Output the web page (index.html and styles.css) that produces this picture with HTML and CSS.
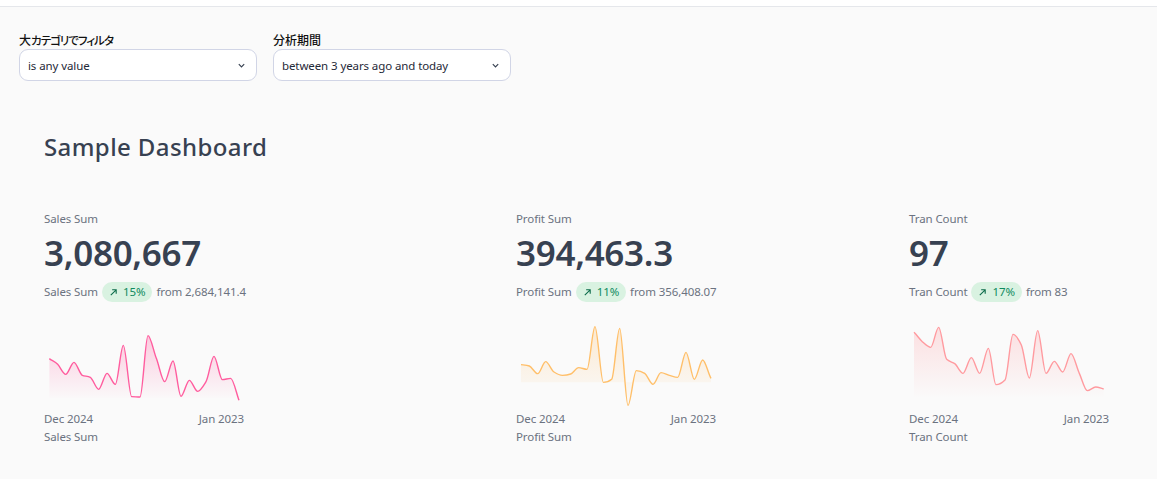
FILE: index.html
```html
<!DOCTYPE html>
<html lang="ja">
<head>
<meta charset="utf-8">
<title>Sample Dashboard</title>
<link rel="stylesheet" href="styles.css">
</head>
<body>
<div class="topbar"></div>
<section class="filters">
  <div class="filter">
    <div class="filter-label">大<span class="kana">カテゴリでフィルタ</span></div>
    <div class="select"><span class="select-text">is any value</span><svg class="chev" viewBox="0 0 10 10"><path d="M2 3.5 5 6.5 8 3.5"/></svg></div>
  </div>
  <div class="filter">
    <div class="filter-label">分析期間</div>
    <div class="select"><span class="select-text">between 3 years ago and today</span><svg class="chev" viewBox="0 0 10 10"><path d="M2 3.5 5 6.5 8 3.5"/></svg></div>
  </div>
</section>
<main class="dashboard">
  <h1 class="title">Sample Dashboard</h1>
  <div class="kpis">
    <article class="kpi">
      <div class="muted">Sales Sum</div>
      <div class="value">3,080,667</div>
      <div class="compare"><span>Sales Sum</span><span class="pill"><svg class="arrow" viewBox="0 0 10 10"><path d="M2 8 8 2M3.5 2H8V6.5"/></svg>15%</span><span>from 2,684,141.4</span></div>
      <svg class="chart" viewBox="42 18 600 270">
        <defs><linearGradient id="gp" x1="0" y1="0" x2="0" y2="1"><stop offset="0" stop-color="#ff5c9e" stop-opacity=".3"/><stop offset="1" stop-color="#ff5c9e" stop-opacity="0"/></linearGradient></defs>
        <path class="area" fill="url(#gp)" d="M58 131C66 137,75 140,83 148C91 156,99 178,107 178C115 178,124 142,132 142C140 142,149 178,157 181C165 184,173 183,181 187C189 191,198 223,206 223C214 223,223 175,231 175C239 175,248 208,256 208C264 208,272 91,280 91C288 91,297 245,305 245C313 245,322 246,330 246C338 246,346 62,354 62C362 62,371 110,379 130C387 150,396 200,404 200C412 200,421 138,429 138C437 138,445 244,453 244C461 244,470 196,478 196C486 196,495 229,503 229C511 229,520 213,528 200C536 187,544 124,552 124C560 124,569 194,577 194C585 194,594 190,602 190C610 190,619 234,627 256L627 250L58 250Z"/>
        <path class="line line-pink" d="M58 131C66 137,75 140,83 148C91 156,99 178,107 178C115 178,124 142,132 142C140 142,149 178,157 181C165 184,173 183,181 187C189 191,198 223,206 223C214 223,223 175,231 175C239 175,248 208,256 208C264 208,272 91,280 91C288 91,297 245,305 245C313 245,322 246,330 246C338 246,346 62,354 62C362 62,371 110,379 130C387 150,396 200,404 200C412 200,421 138,429 138C437 138,445 244,453 244C461 244,470 196,478 196C486 196,495 229,503 229C511 229,520 213,528 200C536 187,544 124,552 124C560 124,569 194,577 194C585 194,594 190,602 190C610 190,619 234,627 256"/>
      </svg>
      <div class="dates muted"><span>Dec 2024</span><span>Jan 2023</span></div>
      <div class="muted chart-label">Sales Sum</div>
    </article>
    <article class="kpi">
      <div class="muted">Profit Sum</div>
      <div class="value">394,463.3</div>
      <div class="compare"><span>Profit Sum</span><span class="pill"><svg class="arrow" viewBox="0 0 10 10"><path d="M2 8 8 2M3.5 2H8V6.5"/></svg>11%</span><span>from 356,408.07</span></div>
      <svg class="chart" viewBox="33 18 600 270">
        <defs><linearGradient id="go" x1="0" y1="0" x2="0" y2="1"><stop offset="0" stop-color="#ffbf69" stop-opacity=".28"/><stop offset="1" stop-color="#ffbf69" stop-opacity="0"/></linearGradient></defs>
        <path class="area" fill="url(#go)" d="M48 149C56 150,65 150,73 153C81 156,90 176,98 176C106 176,114 140,122 140C130 140,139 166,147 171C155 176,164 181,172 181C180 181,189 180,197 177C205 174,213 158,221 158C229 158,238 163,246 163C254 163,262 35,270 35C278 35,287 202,295 202C303 202,312 200,320 193C328 186,336 40,344 40C352 40,361 271,369 271C377 271,386 167,394 167C402 167,411 170,419 175C427 180,436 208,444 208C452 208,460 173,468 173C476 173,485 179,493 181C501 183,510 187,518 187C526 187,535 112,543 112C551 112,560 193,568 193C576 193,585 135,593 135C601 135,610 177,618 190L618 202L48 202Z"/>
        <path class="line line-orange" d="M48 149C56 150,65 150,73 153C81 156,90 176,98 176C106 176,114 140,122 140C130 140,139 166,147 171C155 176,164 181,172 181C180 181,189 180,197 177C205 174,213 158,221 158C229 158,238 163,246 163C254 163,262 35,270 35C278 35,287 202,295 202C303 202,312 200,320 193C328 186,336 40,344 40C352 40,361 271,369 271C377 271,386 167,394 167C402 167,411 170,419 175C427 180,436 208,444 208C452 208,460 173,468 173C476 173,485 179,493 181C501 183,510 187,518 187C526 187,535 112,543 112C551 112,560 193,568 193C576 193,585 135,593 135C601 135,610 177,618 190"/>
      </svg>
      <div class="dates muted"><span>Dec 2024</span><span>Jan 2023</span></div>
      <div class="muted chart-label">Profit Sum</div>
    </article>
    <article class="kpi">
      <div class="muted">Tran Count</div>
      <div class="value">97</div>
      <div class="compare"><span>Tran Count</span><span class="pill"><svg class="arrow" viewBox="0 0 10 10"><path d="M2 8 8 2M3.5 2H8V6.5"/></svg>17%</span><span>from 83</span></div>
      <svg class="chart" viewBox="27 18 600 270">
        <defs><linearGradient id="gr" x1="0" y1="0" x2="0" y2="1"><stop offset="0" stop-color="#ff9a9f" stop-opacity=".28"/><stop offset="1" stop-color="#ff9a9f" stop-opacity="0"/></linearGradient></defs>
        <path class="area" fill="url(#gr)" d="M42 52C50 59,59 73,67 80C75 87,84 97,92 97C100 97,108 37,116 37C124 37,132 126,140 133C148 140,156 141,164 146C172 151,181 175,189 175C197 175,206 128,214 128C222 128,231 175,239 175C247 175,257 100,265 100C273 100,280 209,288 209C296 209,307 203,315 195C323 187,331 58,339 58C347 58,356 73,364 90C372 107,380 189,388 189C396 189,405 47,413 47C421 47,430 175,438 175C446 175,455 139,463 139C471 139,480 171,488 171C496 171,505 116,513 116C521 116,530 158,538 175C546 192,554 227,562 227C570 227,579 216,587 216C595 216,603 220,611 222L611 250L42 250Z"/>
        <path class="line line-red" d="M42 52C50 59,59 73,67 80C75 87,84 97,92 97C100 97,108 37,116 37C124 37,132 126,140 133C148 140,156 141,164 146C172 151,181 175,189 175C197 175,206 128,214 128C222 128,231 175,239 175C247 175,257 100,265 100C273 100,280 209,288 209C296 209,307 203,315 195C323 187,331 58,339 58C347 58,356 73,364 90C372 107,380 189,388 189C396 189,405 47,413 47C421 47,430 175,438 175C446 175,455 139,463 139C471 139,480 171,488 171C496 171,505 116,513 116C521 116,530 158,538 175C546 192,554 227,562 227C570 227,579 216,587 216C595 216,603 220,611 222"/>
      </svg>
      <div class="dates muted"><span>Dec 2024</span><span>Jan 2023</span></div>
      <div class="muted chart-label">Tran Count</div>
    </article>
  </div>
</main>
</body>
</html>
```
FILE: styles.css
```css
* { box-sizing: border-box; }
html, body { margin: 0; height: 100%; overflow: hidden; }
body {
  background: #fafafa;
  font-family: "Noto Sans", "Noto Sans CJK JP", sans-serif;
  font-size: 11.5px;
  letter-spacing: -0.1px;
  line-height: 16px;
  color: #374151;
}
.topbar { height: 7px; background: #fff; border-bottom: 1px solid #e5e7eb; }
.filters { display: flex; gap: 16px; padding: 25px 0 0 19px; }
.filter { width: 238px; }
.filter-label {
  font-family: "Noto Sans CJK JP", sans-serif;
  font-feature-settings: "palt";
  font-size: 12px;
  letter-spacing: 0;
  font-weight: 500;
  color: #111;
  margin-bottom: 1px;
}
.kana { font-size: 11.5px; letter-spacing: -1px; }
.select {
  height: 32px;
  display: flex;
  align-items: center;
  justify-content: space-between;
  padding: 0 10px 0 8px;
  background: #fff;
  border: 1px solid #d1d5e6;
  border-radius: 9px;
  color: #1f2937;
}
.select-text { padding-top: 2px; }
.chev { width: 9px; height: 9px; margin-top: 1px; fill: none; stroke: #374151; stroke-width: 1.3; }
.dashboard { padding: 50px 0 0 44px; }
.title { margin: 0; font-size: 24px; letter-spacing: 0.4px; line-height: 32px; font-weight: 500; color: #374151; }
.kpis { display: grid; grid-template-columns: 472px 393px 200px; margin-top: 48px; }
.kpi { min-width: 0; }
.muted { color: #6b7280; }
.value { margin-top: 6px; font-size: 35px; letter-spacing: -0.3px; line-height: 40px; font-weight: 600; color: #374151; white-space: nowrap; }
.compare { display: flex; align-items: center; gap: 4px; margin-top: 9px; height: 20px; color: #6b7280; white-space: nowrap; }
.pill {
  display: inline-flex;
  align-items: center;
  gap: 5px;
  height: 20px;
  padding: 0 7px;
  border-radius: 10px;
  background: #d9f2e1;
  color: #0f8a5f;
}
.arrow { width: 9px; height: 9px; fill: none; stroke: #0b6b4a; stroke-width: 1.2; }
.chart { display: block; width: 200px; height: 90px; margin-top: 19px; overflow: visible; }
.line { fill: none; stroke-width: 4.2; }
.line-pink { stroke: #ff5c9e; }
.line-orange { stroke: #ffbf69; }
.line-red { stroke: #ff9a9f; }
.dates { display: flex; justify-content: space-between; width: 200px; }
.chart-label { margin-top: 2px; }
```
